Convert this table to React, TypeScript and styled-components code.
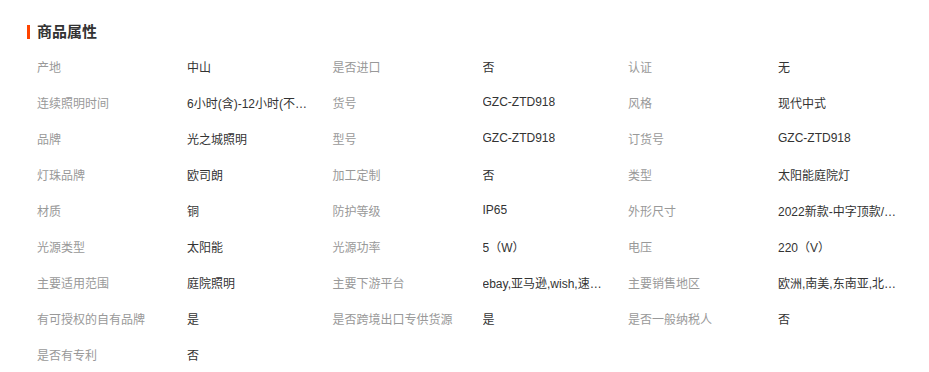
import React from "react";
import styled, { createGlobalStyle } from "styled-components";

interface IAttr {
    name: string;
    value: string;
}

const attrs: IAttr[] = [
    { name: "产地", value: "中山" },
    { name: "是否进口", value: "否" },
    { name: "认证", value: "无" },
    { name: "连续照明时间", value: "6小时(含)-12小时(不含)" },
    { name: "货号", value: "GZC-ZTD918" },
    { name: "风格", value: "现代中式" },
    { name: "品牌", value: "光之城照明" },
    { name: "型号", value: "GZC-ZTD918" },
    { name: "订货号", value: "GZC-ZTD918" },
    { name: "灯珠品牌", value: "欧司朗" },
    { name: "加工定制", value: "否" },
    { name: "类型", value: "太阳能庭院灯" },
    { name: "材质", value: "铜" },
    { name: "防护等级", value: "IP65" },
    { name: "外形尺寸", value: "2022新款-中字顶款/小号" },
    { name: "光源类型", value: "太阳能" },
    { name: "光源功率", value: "5（W）" },
    { name: "电压", value: "220（V）" },
    { name: "主要适用范围", value: "庭院照明" },
    { name: "主要下游平台", value: "ebay,亚马逊,wish,速卖通" },
    { name: "主要销售地区", value: "欧洲,南美,东南亚,北美,非洲" },
    { name: "有可授权的自有品牌", value: "是" },
    { name: "是否跨境出口专供货源", value: "是" },
    { name: "是否一般纳税人", value: "否" },
    { name: "是否有专利", value: "否" },
];

const App = () => {
    return (
        <>
            <GlobalStyle />
            <Wrapper>
                <Title>商品属性</Title>
                <Grid>
                    {attrs.map((attr) => (
                        <Cell key={attr.name}>
                            <Label>{attr.name}</Label>
                            <Value title={attr.value}>{attr.value}</Value>
                        </Cell>
                    ))}
                </Grid>
            </Wrapper>
        </>
    );
};

const GlobalStyle = createGlobalStyle`
    * {
        box-sizing: border-box;
    }
    body {
        margin: 0;
        background: #fff;
        font-family: "Liberation Sans", "Noto Sans CJK SC", sans-serif;
    }
`;

const Wrapper = styled.div`
    width: 929px;
    padding: 22px 0 0 27px;
`;

const Title = styled.h2`
    margin: 0 0 6px;
    height: 20px;
    line-height: 20px;
    font-size: 15px;
    font-weight: 700;
    color: #333;
    display: flex;
    align-items: center;
    gap: 7px;
    &::before {
        content: "";
        width: 3px;
        height: 14px;
        background-color: #ff4400;
    }
`;

const Grid = styled.div`
    display: grid;
    grid-template-columns: repeat(3, 295.5px);
    grid-auto-rows: 36px;
    padding-left: 10px;
`;

const Cell = styled.div`
    display: flex;
    align-items: center;
    font-size: 12px;
`;

const Label = styled.span`
    width: 150px;
    flex-shrink: 0;
    color: #999;
    white-space: nowrap;
`;

const Value = styled.span`
    max-width: 121px;
    color: #333;
    white-space: nowrap;
    overflow: hidden;
    text-overflow: ellipsis;
`;

export default App;
